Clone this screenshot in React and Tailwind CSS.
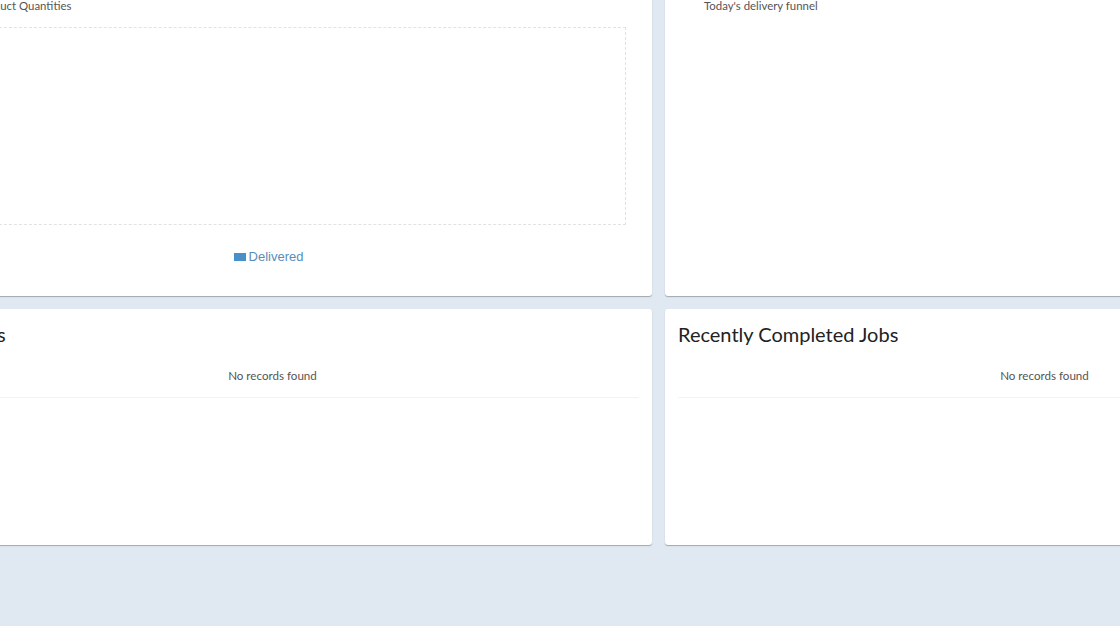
import React from "react";

const font = { fontFamily: "Lato, 'Open Sans', sans-serif" };

function ChartCard({ subtitle, legend, dashed }) {
  return (
    <div className="w-[759px] h-[336px] shrink-0 bg-white rounded-[3px] shadow-[0_1px_1px_rgba(0,0,0,0.28)] flex flex-col">
      <div className="pt-[39px] pl-[39px] text-[11.4px] leading-[14px] text-[#555]">{subtitle}</div>
      {dashed ? (
        <>
          <div className="mt-[14px] mx-[26px] h-[198px] border border-dashed border-[#e2e2e2]" />
          <div className="mt-[24px] flex justify-center items-center gap-[3px] pr-[8px]">
            <span className="w-[12px] h-[8px] bg-[#4a90c8] inline-block" />
            <span className="text-[13px] leading-[16px] text-[#5a8db8]" style={{ fontFamily: "'Liberation Sans', Arial, sans-serif" }}>
              {legend}
            </span>
          </div>
        </>
      ) : null}
    </div>
  );
}

function TableCard({ title }) {
  return (
    <div className="w-[759px] h-[236px] shrink-0 bg-white rounded-[3px] shadow-[0_1px_1px_rgba(0,0,0,0.28)] p-[13px]">
      <h2 className="text-[20px] leading-[24px] text-[#222] font-normal">{title}</h2>
      <div className="mt-[16px] h-[36px] border-b border-[#f3f3f3] flex justify-center pt-[7px]">
        <span className="text-[11.6px] leading-[14px] text-[#555]">No records found</span>
      </div>
    </div>
  );
}

export default function App() {
  return (
    <div className="w-[1120px] h-[627px] flex flex-col bg-[#e0e8f2] overflow-hidden" style={font}>
      <div className="flex-1 overflow-hidden">
        <div className="-ml-[107px] -mt-[40px] flex flex-col gap-[13px]">
          <div className="flex gap-[13px]">
            <ChartCard subtitle="Monthly Product Quantities" legend="Delivered" dashed />
            <ChartCard subtitle="Today's delivery funnel" />
          </div>
          <div className="flex gap-[13px]">
            <TableCard title="Active Jobs" />
            <TableCard title="Recently Completed Jobs" />
          </div>
        </div>
      </div>
      <div className="h-[1px] bg-white" />
    </div>
  );
}
